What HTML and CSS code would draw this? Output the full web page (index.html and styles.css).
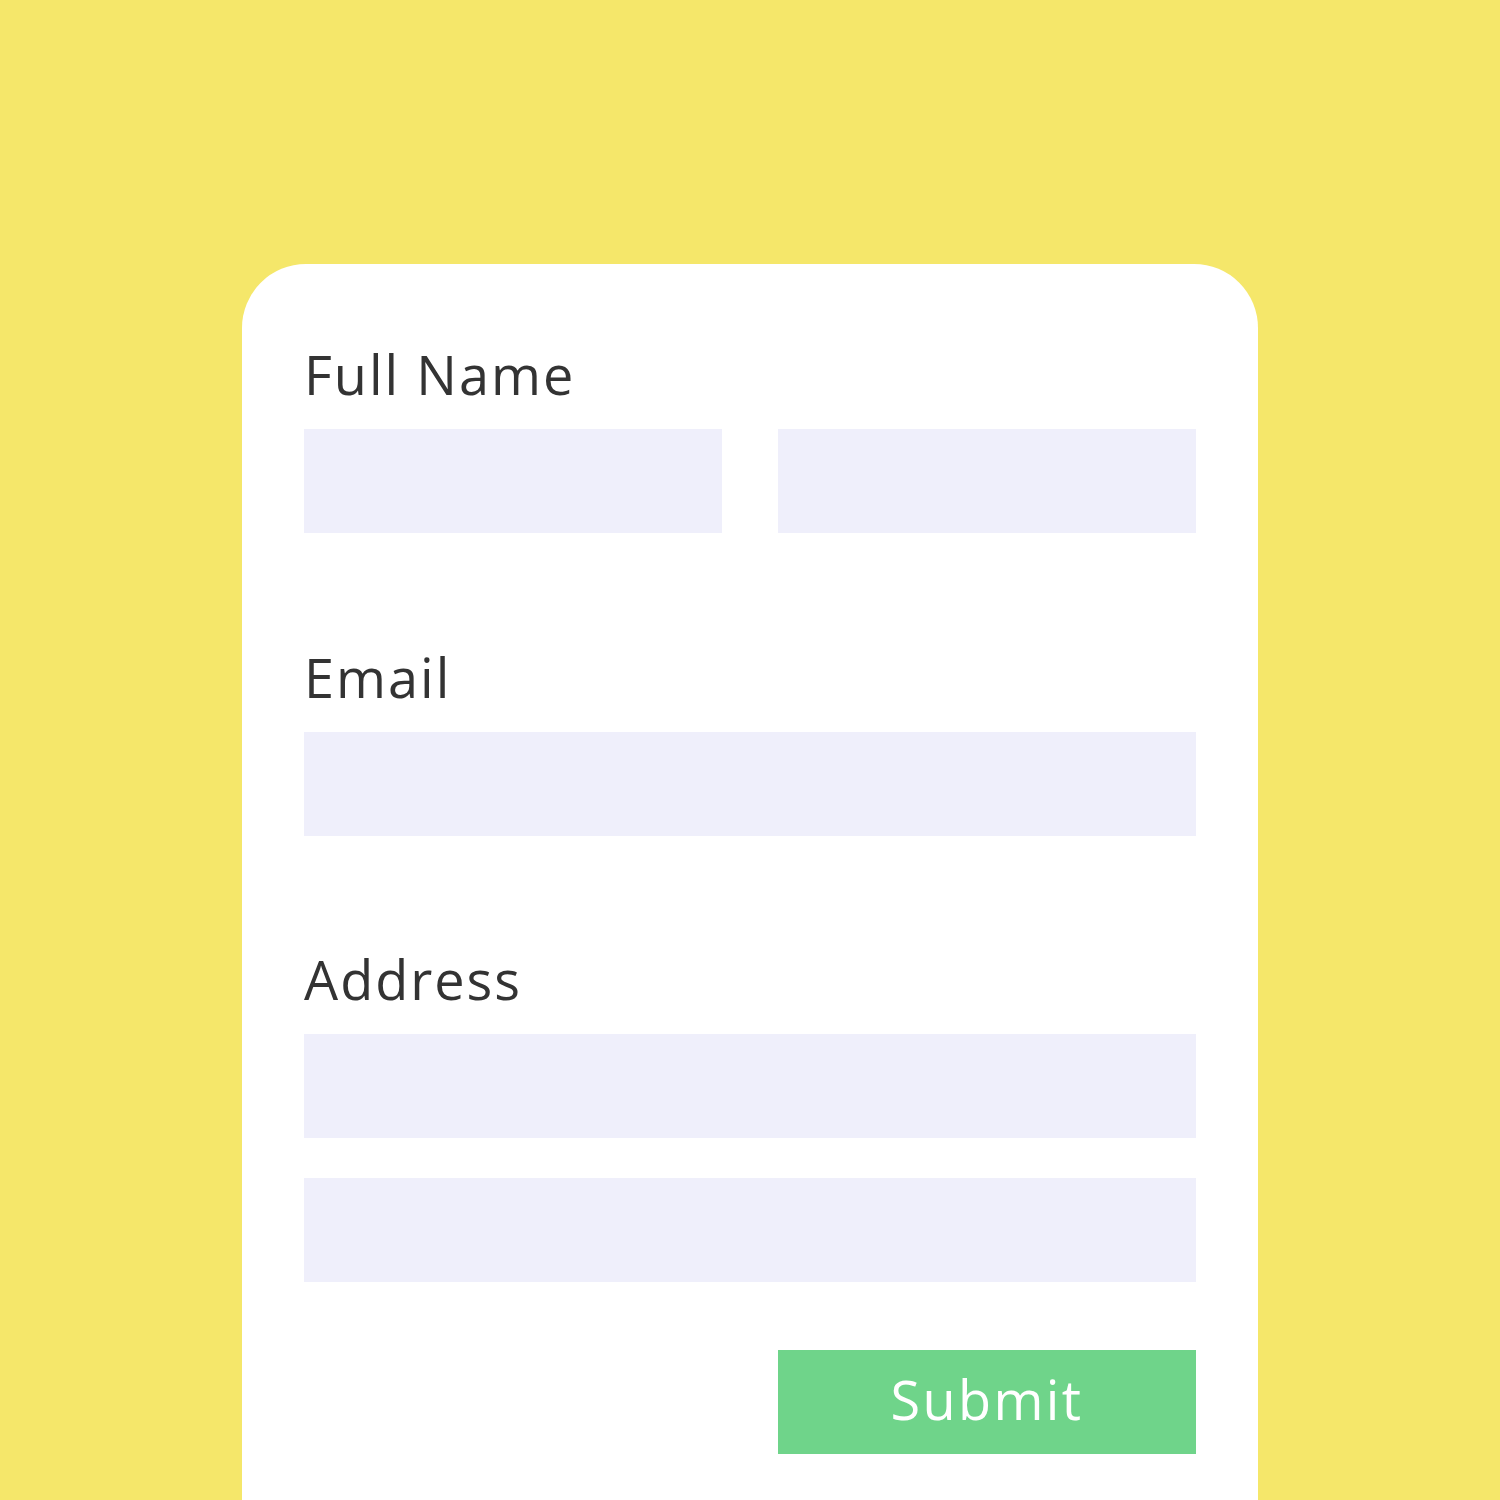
FILE: index.html
```html
<!DOCTYPE html>
<html lang="en">
<head>
<meta charset="utf-8">
<title>Form</title>
<link rel="stylesheet" href="styles.css">
</head>
<body>
<div class="card">
  <div class="field field-name">
    <div class="label">Full Name</div>
    <div class="row-two">
      <div class="input"></div>
      <div class="input"></div>
    </div>
  </div>
  <div class="field field-email">
    <div class="label">Email</div>
    <div class="input"></div>
  </div>
  <div class="field field-address">
    <div class="label">Address</div>
    <div class="input"></div>
    <div class="input input-second"></div>
  </div>
  <div class="actions">
    <div class="spacer"></div>
    <div class="submit">Submit</div>
  </div>
</div>
</body>
</html>
```

FILE: styles.css
```css
html, body {
  margin: 0;
  padding: 0;
}
body {
  background: #f5e76a;
  height: 1500px;
  overflow: hidden;
  font-family: "Open Sans", "Liberation Sans", sans-serif;
}
.card {
  margin: 264px 0 0 242px;
  width: 1016px;
  height: 1300px;
  box-sizing: border-box;
  padding: 84px 62px 0;
  background: #ffffff;
  border-radius: 64px 64px 0 0;
}
.label {
  font-size: 54px;
  line-height: 52px;
  height: 52px;
  color: #333333;
  letter-spacing: 2px;
  white-space: nowrap;
}
.input {
  height: 104px;
  background: #efeffb;
}
.field .label + .input,
.field .label + .row-two {
  margin-top: 29px;
}
.row-two {
  display: grid;
  grid-template-columns: 1fr 1fr;
  column-gap: 56px;
}
.field-email {
  margin-top: 118px;
}
.field-address {
  margin-top: 117px;
}
.input-second {
  margin-top: 40px;
}
.actions {
  display: grid;
  grid-template-columns: 1fr 1fr;
  column-gap: 56px;
  margin-top: 68px;
}
.submit {
  height: 104px;
  background: #6fd48a;
  color: #ffffff;
  font-size: 54px;
  letter-spacing: 2.4px;
  display: flex;
  align-items: center;
  justify-content: center;
  padding-bottom: 6px;
  box-sizing: border-box;
}
```
